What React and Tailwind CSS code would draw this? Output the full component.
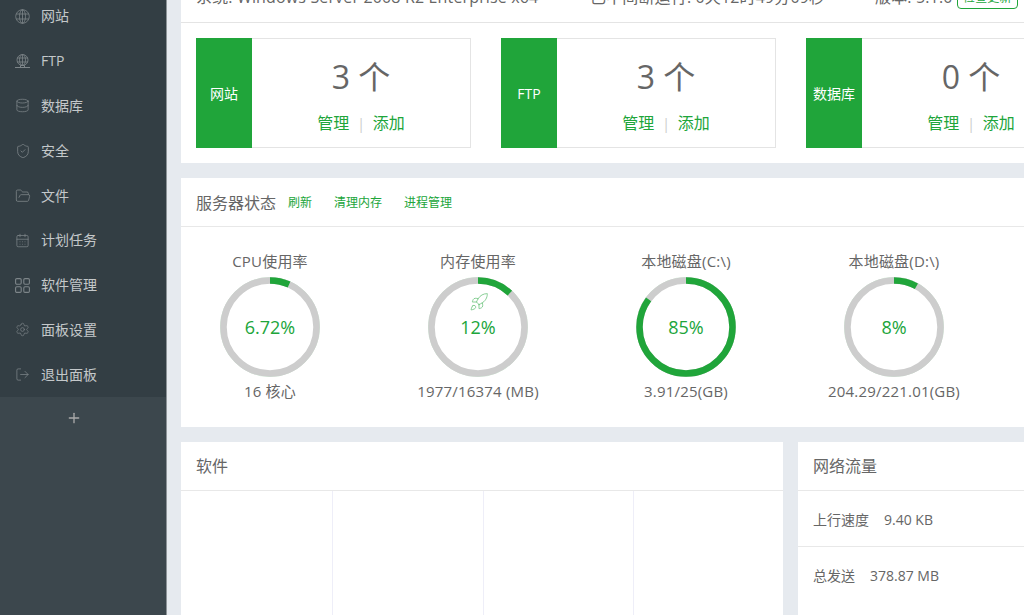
import { Database, ShieldCheck, FolderOpen, CalendarDays, Settings, LogOut, Plus, Rocket } from 'lucide-react'

const FONT = { fontFamily: '"Open Sans", "Noto Sans CJK SC", sans-serif' }

function GlobeIcon({ small }) {
  return (
    <svg width="15" height="15" viewBox="0 0 15 15" fill="none" stroke="currentColor" strokeWidth="0.8">
      <circle cx="7.5" cy={small ? 6 : 7.5} r={small ? 5.5 : 6.8} />
      <ellipse cx="7.5" cy={small ? 6 : 7.5} rx="3" ry={small ? 5.5 : 6.8} />
      <path d={small ? 'M2 4h11M2 8h11M7.5 .5v11' : 'M1.2 5h12.6M1.2 10h12.6M7.5 .7v13.6'} />
      {small && <path d="M0 13.5h15M5.5 13.5h4v-2h-4z" strokeWidth="1" />}
    </svg>
  )
}

const NAV = [
  { label: '网站', icon: <GlobeIcon /> },
  { label: 'FTP', icon: <GlobeIcon small /> },
  { label: '数据库', icon: <Database size={15} strokeWidth={1.2} /> },
  { label: '安全', icon: <ShieldCheck size={16} strokeWidth={1.2} /> },
  { label: '文件', icon: <FolderOpen size={16} strokeWidth={1.2} /> },
  { label: '计划任务', icon: <CalendarDays size={15} strokeWidth={1.2} /> },
  { label: '软件管理', icon: (
    <svg width="15" height="15" viewBox="0 0 15 15" fill="none" stroke="currentColor" strokeWidth="1.1">
      <rect x="0.6" y="0.6" width="5.6" height="5.6" rx="1.2" />
      <rect x="8.8" y="0.6" width="5.6" height="5.6" rx="1.2" />
      <rect x="0.6" y="8.8" width="5.6" height="5.6" rx="1.2" />
      <rect x="8.8" y="8.8" width="5.6" height="5.6" rx="1.2" />
    </svg>
  ) },
  { label: '面板设置', icon: <Settings size={15} strokeWidth={1.1} /> },
  { label: '退出面板', icon: <LogOut size={15} strokeWidth={1.2} /> },
]

const CARDS = [
  { label: '网站', count: 3 },
  { label: 'FTP', count: 3 },
  { label: '数据库', count: 0 },
]

const GAUGES = [
  { title: 'CPU使用率', pct: 6.72, text: '6.72%', sub: '16 核心' },
  { title: '内存使用率', pct: 12, text: '12%', sub: '1977/16374 (MB)', rocket: true },
  { title: '本地磁盘(C:\\)', pct: 85, text: '85%', sub: '3.91/25(GB)' },
  { title: '本地磁盘(D:\\)', pct: 8, text: '8%', sub: '204.29/221.01(GB)' },
]

function CountCard({ label, count }) {
  return (
    <div className="flex h-[110px] w-[275px] shrink-0">
      <div className="flex w-[56px] shrink-0 items-center justify-center bg-[#20a53a] pt-[2px] text-sm text-white">{label}</div>
      <div className="flex-1 border border-l-0 border-[#e4e4e4] text-center">
        <div className="mt-[14px] text-[32px] leading-[48px] text-[#666]">{count} 个</div>
        <div className="mt-[10px] text-base leading-6 text-[#20a53a]">
          管理<span className="mx-[8px] text-sm text-[#ccc]">|</span>添加
        </div>
      </div>
    </div>
  )
}

function Gauge({ title, pct, text, sub, rocket }) {
  const r = 46.5
  const c = 2 * Math.PI * r
  return (
    <div className="flex w-[178px] shrink-0 flex-col items-center text-[15px] text-[#666]">
      <div className="leading-[20px] tracking-[0.2px] whitespace-nowrap">{title}</div>
      <div className="relative mt-[6px] h-[100px] w-[100px]">
        <svg width="100" height="100" viewBox="0 0 100 100" className="-rotate-90">
          <circle cx="50" cy="50" r="49.6" fill="none" stroke="#20a53a" strokeOpacity="0.35" strokeWidth="0.6" />
          <circle cx="50" cy="50" r={r} fill="none" stroke="#cdcdcd" strokeWidth="6.5" />
          <circle cx="50" cy="50" r={r} fill="none" stroke="#20a53a" strokeWidth="6.5" strokeDasharray={`${(c * pct) / 100} ${c}`} />
        </svg>
        <div className="absolute inset-0 flex items-center justify-center text-lg text-[#20a53a]">{text}</div>
        {rocket && (
          <Rocket size={20} strokeWidth={0.9} className="absolute left-[41px] top-[15px] text-[#20a53a] opacity-70" />
        )}
      </div>
      <div className="mt-[4px] leading-[20px] tracking-[0.2px] whitespace-nowrap">{sub}</div>
    </div>
  )
}

export default function App() {
  return (
    <div className="flex h-[615px] w-[1024px] overflow-hidden bg-[#e6eaef]" style={FONT}>
      <aside className="flex w-[167px] shrink-0 flex-col overflow-hidden border-r border-[#8d9498] bg-[#333e44]">
        <div className="-mt-[6px]">
          {NAV.map((n) => (
            <div key={n.label} className="flex h-[44.8px] items-center pl-[15px] text-sm text-[#c4c8ca]">
              <span className="flex w-[26px] text-[#7d8589]">{n.icon}</span>
              {n.label}
            </div>
          ))}
        </div>
        <div className="flex flex-1 justify-center bg-[#3c474d] pt-[13px] pr-[18px] text-[#aaa]">
          <Plus size={16} strokeWidth={2} />
        </div>
      </aside>

      <main className="ml-[14px] flex min-w-0 flex-1 flex-col gap-[15px] overflow-hidden">
        <section className="w-[860px] shrink-0 bg-white">
          <div className="h-[23px] overflow-hidden border-b border-[#e4e4e4] pl-[15px] text-base leading-6 tracking-[0.15px] whitespace-nowrap text-[#666]">
            <div className="-mt-[15px] flex items-center">
              <span className="w-[394px] shrink-0">系统: Windows Server 2008 R2 Enterprise x64</span>
              <span className="w-[285px] shrink-0">已不间断运行: 0天12时49分09秒</span>
              <span className="w-[82px] shrink-0">版本: 5.1.0</span>
              <span className="mt-[2px] mr-[6px] shrink-0 rounded border border-[#20a53a] px-[5px] text-xs leading-5 text-[#20a53a]">检查更新</span>
              <span className="mt-[2px] shrink-0 rounded border border-[#20a53a] px-[5px] text-xs leading-5 text-[#20a53a]">修复</span>
            </div>
          </div>
          <div className="flex gap-[30px] px-[15px] pt-[15px] pb-[15px]">
            {CARDS.map((c) => <CountCard key={c.label} {...c} />)}
          </div>
        </section>

        <section className="w-[860px] shrink-0 bg-white">
          <div className="flex h-[49px] items-center border-b border-[#e8e8e8] pt-[2px] pl-[15px]">
            <span className="text-base text-[#666]">服务器状态</span>
            <div className="ml-3 flex gap-[22px] text-xs text-[#20a53a]">
              <span>刷新</span>
              <span>清理内存</span>
              <span>进程管理</span>
            </div>
          </div>
          <div className="flex h-[200px] gap-[30px] pt-[24px]">
            {GAUGES.map((g) => <Gauge key={g.title} {...g} />)}
          </div>
        </section>

        <div className="flex min-h-0 flex-1 gap-[15px]">
          <section className="flex w-[602px] shrink-0 flex-col bg-white">
            <div className="flex h-[49px] shrink-0 items-center border-b border-[#e8e8e8] pl-[15px] text-base text-[#666]">软件</div>
            <div className="grid flex-1 grid-cols-[152px_151px_150px_1fr]">
              <div className="border-r border-[#eeeef8]" />
              <div className="border-r border-[#eeeef8]" />
              <div className="border-r border-[#eeeef8]" />
              <div />
            </div>
          </section>
          <section className="w-[300px] shrink-0 bg-white text-[#666]">
            <div className="flex h-[49px] items-center border-b border-[#e8e8e8] pl-[15px] text-base">网络流量</div>
            <div className="flex h-[56px] items-center border-b border-[#e8e8e8] pt-[2px] pl-[15px] text-sm">
              <span className="w-[71px]">上行速度</span>
              <span>9.40 KB</span>
            </div>
            <div className="flex h-[56px] items-center pt-[2px] pl-[15px] text-sm">
              <span className="w-[57px]">总发送</span>
              <span>378.87 MB</span>
            </div>
          </section>
        </div>
      </main>
    </div>
  )
}
